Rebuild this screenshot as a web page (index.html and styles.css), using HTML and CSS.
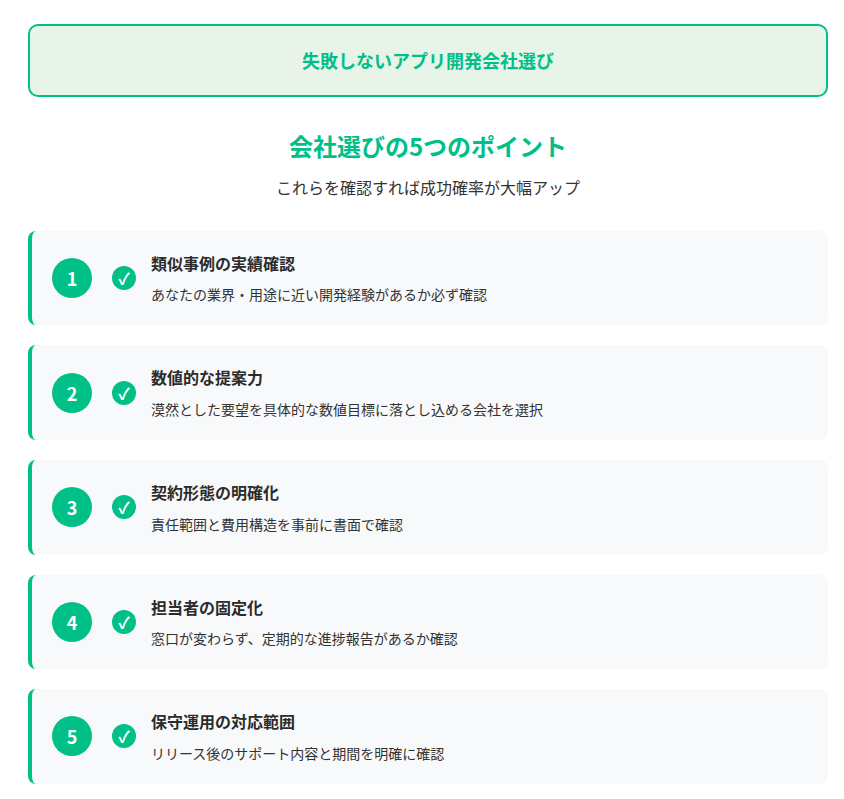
FILE: index.html
```html
<!DOCTYPE html>
<html lang="ja">
<head>
<meta charset="utf-8">
<title>失敗しないアプリ開発会社選び</title>
<link rel="stylesheet" href="styles.css">
</head>
<body>
<main class="page">
<header class="banner"><h1 class="banner-title">失敗しないアプリ開発会社選び</h1></header>
<section class="intro">
<h2 class="intro-title">会社選びの5つのポイント</h2>
<p class="intro-sub">これらを確認すれば成功確率が大幅アップ</p>
</section>
<ol class="points">
<li class="point"><span class="num">1</span><span class="check">✓</span><div class="body"><h3 class="point-title">類似事例の実績確認</h3><p class="point-text">あなたの業界・用途に近い開発経験があるか必ず確認</p></div></li>
<li class="point"><span class="num">2</span><span class="check">✓</span><div class="body"><h3 class="point-title">数値的な提案力</h3><p class="point-text">漠然とした要望を具体的な数値目標に落とし込める会社を選択</p></div></li>
<li class="point"><span class="num">3</span><span class="check">✓</span><div class="body"><h3 class="point-title">契約形態の明確化</h3><p class="point-text">責任範囲と費用構造を事前に書面で確認</p></div></li>
<li class="point"><span class="num">4</span><span class="check">✓</span><div class="body"><h3 class="point-title">担当者の固定化</h3><p class="point-text">窓口が変わらず、定期的な進捗報告があるか確認</p></div></li>
<li class="point"><span class="num">5</span><span class="check">✓</span><div class="body"><h3 class="point-title">保守運用の対応範囲</h3><p class="point-text">リリース後のサポート内容と期間を明確に確認</p></div></li>
</ol>
</main>
</body>
</html>
```
FILE: styles.css
```css
* { box-sizing: border-box; }
html, body { margin: 0; padding: 0; background: #fff; }
body { font-family: "Noto Sans CJK JP", "Noto Sans", sans-serif; color: #333; overflow: hidden; }
.page { width: 800px; margin-left: 28px; padding-top: 24px; }
.banner { height: 73px; border: 2px solid #00c087; border-radius: 10px; background: #e9f4e8; display: flex; align-items: center; justify-content: center; }
.banner-title { margin: 0; font-size: 18px; line-height: 1.5; font-weight: 700; color: #00c087; }
.intro { text-align: center; margin-top: 31px; margin-bottom: 31.8px; }
.intro-title { margin: 0; font-size: 24px; line-height: 36px; font-weight: 700; color: #00c087; }
.intro-sub { margin: 11px 0 0; font-size: 16px; line-height: 24px; color: #333; }
.points { list-style: none; margin: 0; padding: 0; display: flex; flex-direction: column; gap: 20px; }
.point { height: 94.6px; display: flex; align-items: center; background: #f8f9fa; border-left: 4px solid #00c087; border-radius: 8px; padding-left: 20px; }
.num { width: 40px; height: 40px; flex: none; border-radius: 50%; background: #00c087; color: #fff; font-size: 18px; font-weight: 700; display: flex; align-items: center; justify-content: center; }
.check { width: 24px; height: 24px; flex: none; margin-left: 20px; border-radius: 50%; background: #00c087; color: #fff; font-size: 16px; font-weight: 700; display: flex; align-items: center; justify-content: center; }
.body { margin-left: 15px; }
.point-title { margin: 0; font-size: 16px; line-height: 24px; font-weight: 700; color: #2b2b2b; }
.point-text { margin: 9.6px 0 0; font-size: 14px; line-height: 21px; color: #333; }
```
